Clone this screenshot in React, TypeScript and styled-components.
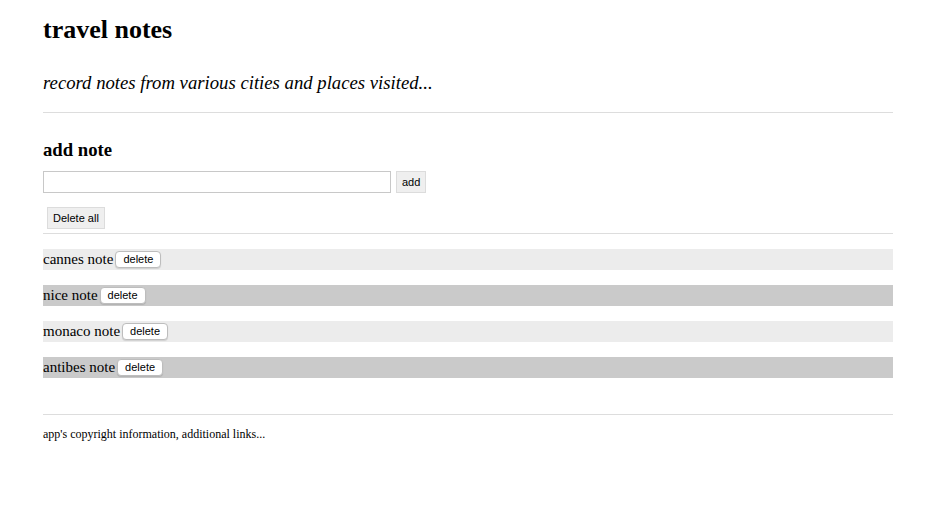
import React from "react";
import styled, { createGlobalStyle } from "styled-components";

const GlobalStyle = createGlobalStyle`
  html, body { margin: 0; padding: 0; background: #ffffff; }
  body { font-family: "Liberation Serif", "Times New Roman", serif; color: #000; }
  * { box-sizing: border-box; }
`;

const Page = styled.div`
  width: 850px;
  margin: 0 auto;
  display: flex;
  flex-direction: column;
`;

const Title = styled.h1`
  margin: 15px 0 0;
  font-size: 26px;
  line-height: 30px;
  font-weight: bold;
`;

const Subtitle = styled.p`
  margin: 27px 0 0;
  font-size: 18.72px;
  line-height: 22px;
  font-style: italic;
`;

const Rule = styled.hr<{ $top: number }>`
  margin: ${(p) => p.$top}px 0 0;
  border: 0;
  border-top: 1px solid #dddddd;
  height: 0;
  width: 100%;
`;

const SectionTitle = styled.h3`
  margin: 26px 0 0;
  font-size: 18.72px;
  line-height: 22px;
  font-weight: bold;
`;

const Form = styled.form`
  margin-top: 10px;
  display: flex;
  align-items: center;
  gap: 5px;
`;

const TextInput = styled.input`
  width: 348px;
  height: 22px;
  border: 1px solid #c8c8c8;
  background: #fff;
  padding: 0 4px;
  font-size: 13px;
  outline: none;
`;

const FlatButton = styled.button<{ $indent?: number }>`
  height: 22px;
  padding: 0 5px;
  margin-left: ${(p) => p.$indent ?? 0}px;
  background: #efefef;
  border: 1px solid #dcdcdc;
  border-radius: 0;
  font-family: "Liberation Sans", Arial, sans-serif;
  font-size: 11px;
  color: #000;
  cursor: pointer;
`;

const ClearRow = styled.div`
  margin-top: 14px;
  display: flex;
`;

const NoteList = styled.ul`
  list-style: none;
  margin: 15px 0 0;
  padding: 0;
  display: flex;
  flex-direction: column;
  gap: 15px;
`;

const NoteItem = styled.li<{ $shade: "light" | "dark" }>`
  height: 21px;
  display: flex;
  align-items: center;
  background: ${(p) => (p.$shade === "light" ? "#ececec" : "#cacaca")};
  font-size: 15px;
  line-height: 17px;
  padding-bottom: 1px;
`;

const DeleteButton = styled.button`
  margin-left: 2px;
  height: 17px;
  padding: 0 7px;
  background: #ffffff;
  border: 1px solid #bdbdbd;
  border-radius: 4px;
  box-shadow: 0 1px 1px rgba(0, 0, 0, 0.12);
  font-family: "Liberation Sans", Arial, sans-serif;
  font-size: 11px;
  line-height: 14px;
  color: #000;
  cursor: pointer;
`;

const Footer = styled.footer`
  display: flex;
  flex-direction: column;
`;

const FooterText = styled.p`
  margin: 12px 0 0;
  font-size: 12px;
  line-height: 14px;
`;

const notes = ["cannes note", "nice note", "monaco note", "antibes note"];

export default function App() {
  return (
    <>
      <GlobalStyle />
      <Page>
        <header>
          <Title>travel notes</Title>
          <Subtitle>record notes from various cities and places visited...</Subtitle>
        </header>
        <Rule $top={18} />
        <section>
          <SectionTitle>add note</SectionTitle>
          <Form onSubmit={(e) => e.preventDefault()}>
            <TextInput type="text" />
            <FlatButton type="submit">add</FlatButton>
          </Form>
          <ClearRow>
            <FlatButton $indent={4}>Delete all</FlatButton>
          </ClearRow>
        </section>
        <Rule $top={4} />
        <NoteList>
          {notes.map((n, i) => (
            <NoteItem key={n} $shade={i % 2 === 0 ? "light" : "dark"}>
              {n}
              <DeleteButton>delete</DeleteButton>
            </NoteItem>
          ))}
        </NoteList>
        <Footer>
          <Rule $top={36} />
          <FooterText>app's copyright information, additional links...</FooterText>
        </Footer>
      </Page>
    </>
  );
}
